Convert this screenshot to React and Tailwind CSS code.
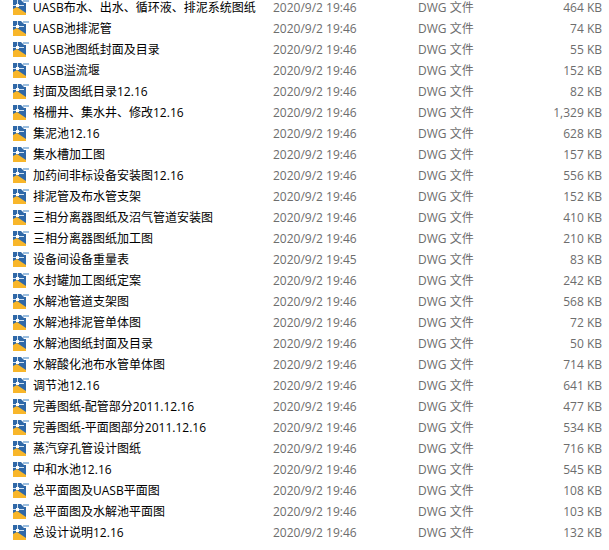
const files = [
  ["UASB布水、出水、循环液、排泥系统图纸", "2020/9/2 19:46", "464 KB"],
  ["UASB池排泥管", "2020/9/2 19:46", "74 KB"],
  ["UASB池图纸封面及目录", "2020/9/2 19:46", "55 KB"],
  ["UASB溢流堰", "2020/9/2 19:46", "152 KB"],
  ["封面及图纸目录12.16", "2020/9/2 19:46", "82 KB"],
  ["格栅井、集水井、修改12.16", "2020/9/2 19:46", "1,329 KB"],
  ["集泥池12.16", "2020/9/2 19:46", "628 KB"],
  ["集水槽加工图", "2020/9/2 19:46", "157 KB"],
  ["加药间非标设备安装图12.16", "2020/9/2 19:46", "556 KB"],
  ["排泥管及布水管支架", "2020/9/2 19:46", "152 KB"],
  ["三相分离器图纸及沼气管道安装图", "2020/9/2 19:46", "410 KB"],
  ["三相分离器图纸加工图", "2020/9/2 19:46", "210 KB"],
  ["设备间设备重量表", "2020/9/2 19:45", "83 KB"],
  ["水封罐加工图纸定案", "2020/9/2 19:46", "242 KB"],
  ["水解池管道支架图", "2020/9/2 19:46", "568 KB"],
  ["水解池排泥管单体图", "2020/9/2 19:46", "72 KB"],
  ["水解池图纸封面及目录", "2020/9/2 19:46", "50 KB"],
  ["水解酸化池布水管单体图", "2020/9/2 19:46", "714 KB"],
  ["调节池12.16", "2020/9/2 19:46", "641 KB"],
  ["完善图纸-配管部分2011.12.16", "2020/9/2 19:46", "477 KB"],
  ["完善图纸-平面图部分2011.12.16", "2020/9/2 19:46", "534 KB"],
  ["蒸汽穿孔管设计图纸", "2020/9/2 19:46", "716 KB"],
  ["中和水池12.16", "2020/9/2 19:46", "545 KB"],
  ["总平面图及UASB平面图", "2020/9/2 19:46", "108 KB"],
  ["总平面图及水解池平面图", "2020/9/2 19:46", "103 KB"],
  ["总设计说明12.16", "2020/9/2 19:46", "132 KB"],
];

// DWG file icon
const DwgIcon = () => (
  <svg width="16" height="16" viewBox="0 0 16 16" className="shrink-0">
    <rect x="0" y="0" width="13" height="15" fill="#2f68a8" />
    <path d="M8 0 H13 V3 H11 Z" fill="#fff" />
    <rect x="10" y="0" width="6" height="2" fill="#9dbfdf" />
    <path d="M0 9 L4 7 L13 13 V15 H0 Z" fill="#f8b62a" />
    <path d="M0 5.5 H11 M4.5 0 V7" stroke="#d5e4f2" strokeWidth="1" fill="none" />
    <rect x="3" y="4" width="3" height="3" fill="#fff" />
  </svg>
);

export default function App() {
  return (
    <div className="h-[550px] w-[609px] overflow-hidden bg-white text-xs font-['Open_Sans','Noto_Sans_CJK_SC',sans-serif]">
      <div className="-mt-[3px] flex flex-col">
        {files.map(([name, date, size]) => (
          <div key={name} className="flex h-[21px] items-center pl-[13px] pr-[7px]">
            <DwgIcon />
            <span className="ml-1 w-[240px] truncate text-black">{name}</span>
            <span className="w-[145px] text-[#6d6d6d]">{date}</span>
            <span className="text-[#6d6d6d]">DWG 文件</span>
            <span className="ml-auto text-[#6d6d6d]">{size}</span>
          </div>
        ))}
      </div>
    </div>
  );
}
